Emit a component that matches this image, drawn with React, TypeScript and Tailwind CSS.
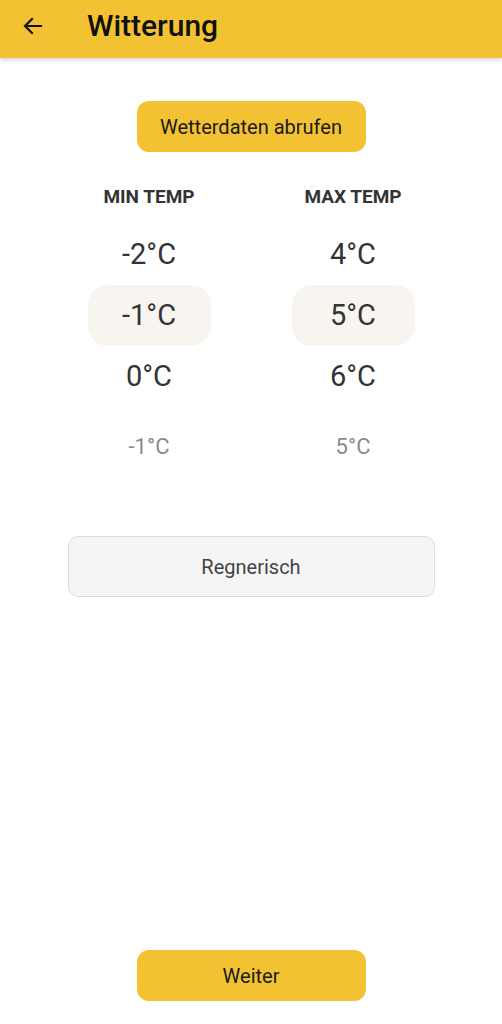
import React from "react";

const font = { fontFamily: "Roboto, 'Noto Sans', sans-serif" };

const TempColumn = ({ label, above, selected, below, picked }: { label: string; above: string; selected: string; below: string; picked: string }) => {
    return (
        <div className="w-[204px] flex flex-col items-center">
            <div className="text-[19px] font-bold text-[#333333] h-[26px] leading-[26px]">{label}</div>
            <div className="mt-[14px] h-[61px] flex items-center justify-center text-[29px] text-[#333333]">{above}</div>
            <div className="h-[61px] w-[123px] rounded-[20px] bg-[#f8f5f1] flex items-center justify-center text-[29px] text-[#333333]">{selected}</div>
            <div className="h-[61px] flex items-center justify-center text-[29px] text-[#333333]">{below}</div>
            <div className="mt-[28px] text-[22px] text-[#8a8a8a] h-[24px] leading-[24px]">{picked}</div>
        </div>
    );
};

const App = () => {
    return (
        <div className="w-[502px] h-[1024px] bg-white flex flex-col" style={font}>
            {/* Kopfzeile */}
            <header className="h-[58px] pb-[7px] bg-[#f2c233] flex items-center shadow-[0_2px_4px_rgba(0,0,0,0.18)] relative z-10">
                <button aria-label="Zurück" className="ml-[20px] w-[26px] h-[26px] flex items-center justify-center text-[#111]">
                    <svg width="24" height="24" viewBox="0 0 24 24" fill="none" stroke="currentColor" strokeWidth="2.2" strokeLinecap="square">
                        <path d="M20 12H5M11 5l-7 7 7 7" />
                    </svg>
                </button>
                <h1 className="ml-[41px] text-[30px] font-medium text-[#111]">Witterung</h1>
            </header>

            <main className="flex-1 flex flex-col items-center">
                <button className="mt-[43px] w-[229px] h-[51px] rounded-[12px] bg-[#f2c233] text-[20px] text-[#1a1a1a]">
                    Wetterdaten abrufen
                </button>

                <div className="mt-[32px] flex justify-center">
                    <TempColumn label="MIN TEMP" above="-2°C" selected="-1°C" below="0°C" picked="-1°C" />
                    <TempColumn label="MAX TEMP" above="4°C" selected="5°C" below="6°C" picked="5°C" />
                </div>

                <div className="mt-[77px] w-[367px] h-[61px] rounded-[10px] bg-[#f5f5f5] border border-[#dddddd] flex items-center justify-center text-[20px] text-[#444444]">
                    Regnerisch
                </div>

                <div className="flex-1" />

                <button className="mb-[23px] w-[229px] h-[51px] rounded-[12px] bg-[#f2c233] text-[20px] text-[#1a1a1a]">
                    Weiter
                </button>
            </main>
        </div>
    );
};

export default App;
